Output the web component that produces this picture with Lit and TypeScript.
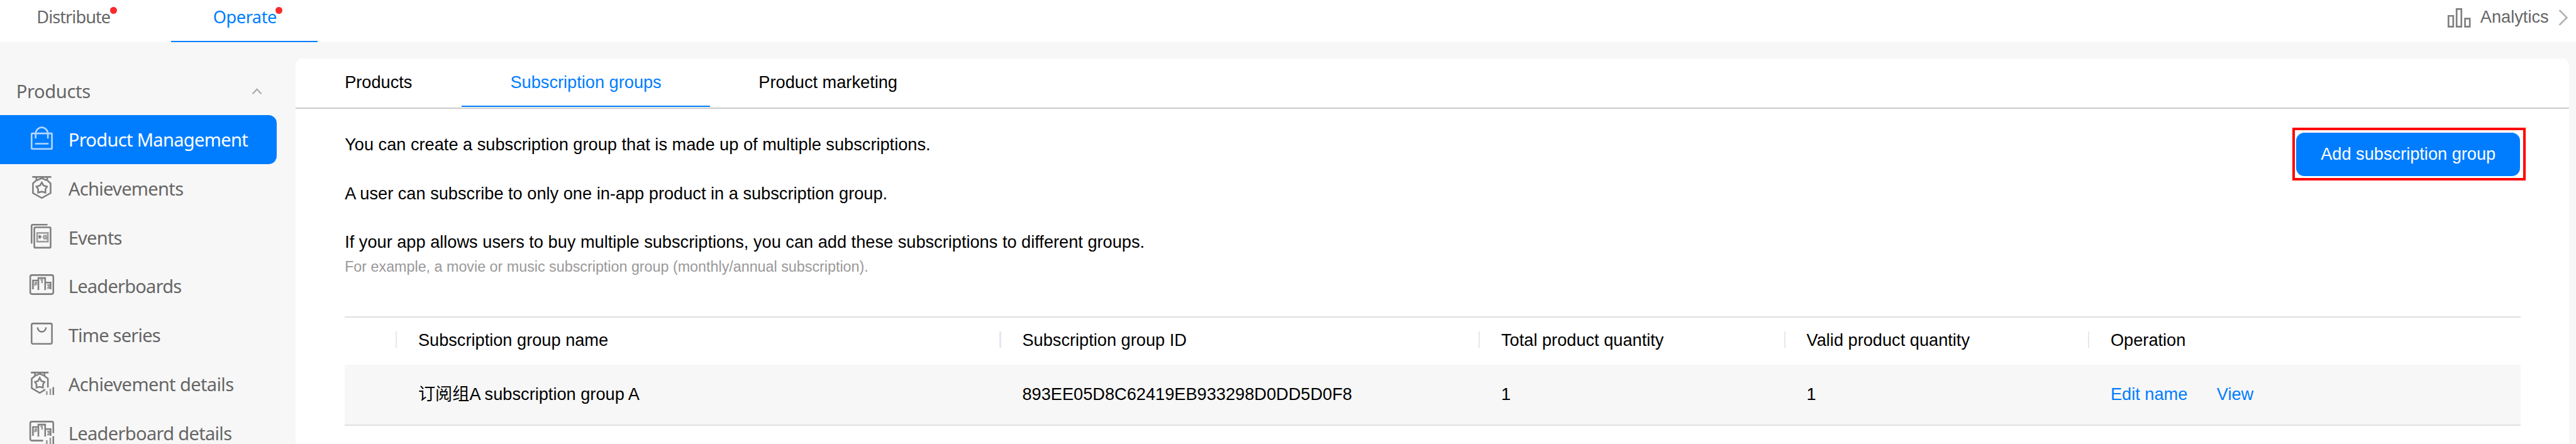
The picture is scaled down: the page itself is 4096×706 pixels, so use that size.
import { LitElement, html, css, svg, unsafeCSS } from "lit";
import { customElement } from "lit/decorators.js";
import { classMap } from "lit/directives/class-map.js";

// Converts a length on the 1898-unit design grid to pixels of the 4096px layout.
const u = (n: number) => unsafeCSS(`${((n * 4096) / 1898).toFixed(3)}px`);

const podium = svg`
  <path d="M2.5 13V6.5H6.5M6.5 13.5V4.7H11.5V13.5M11.5 8H15.5V13" />
  <path class="soft" d="M3.8 8H5V9.2H4V10.3M8.2 6.3L9.2 5.6V8.4M13 9.8H14.3V12H13" />`;
const bars = svg`<path class="soft" d="M12.7 16.2V19M15.3 14.4V19" /><path d="M17.5 13.2V19" />`;

const icons: Record<string, unknown> = {
  bag: svg`<rect x="1.5" y="6.1" width="15" height="11.4" rx=".4" />
    <path d="M4.5 9.8V6.5a4.5 4.9 0 0 1 9 0V9.8M4 13.7H14" />`,
  medal: svg`<path d="M2 2.5H16M5 2.8V5L2.5 7.2V14.4L9 18L15.5 14.4V7.2L13 5V2.8M5.4 5L9 3.4L12.6 5" />
    <path d="M9 6.6L10.3 8.8L12.9 9.6L11.7 11.4V14L9 13.3L6.3 14V11.4L5.1 9.6L7.7 8.8Z" />`,
  events: svg`<path d="M13.2 1.5H2.3Q1.5 1.5 1.5 2.4V15.4" /><rect x="3.5" y="3.5" width="12" height="15" rx=".7" />
    <rect class="soft" x="5.6" y="7.6" width="7.9" height="6.4" />
    <path d="M7.5 9.2V11.8M6.5 10.5H8.7" /><path class="soft" d="M12.6 9.6H10.8L10.2 10.6L10.8 11.8H12.6V10.6H11.6" />`,
  board: svg`<rect x=".5" y="2.5" width="17" height="14" rx="1.3" />${podium}`,
  series: svg`<rect x="1.5" y="2.5" width="15" height="15" rx="1" /><path d="M5.9 5.4C6.2 9.7 11.8 9.7 12.1 5.4" />`,
  medalStats: svg`<path d="M1 2.5H14M4 2.8V5L1.6 7V14L7.5 17.5L11.6 15M13.5 13.6V7L11 5V2.8M4.3 4.8L7.5 3.4L10.7 4.8" />
    <path d="M7.5 6.4L8.7 8.7L11 9.5L9.9 11.2V13.6L7.5 13L5.1 13.6V11.2L4 9.5L6.3 8.7Z" />${bars}`,
  boardStats: svg`<path d="M10 16.5H1.8Q.5 16.5 .5 15.2V3.8Q.5 2.5 1.8 2.5H16.2Q17.5 2.5 17.5 3.8V11" />${podium}${bars}`,
};

const nav = [
  ["bag", "Product Management", "a"],
  ["medal", "Achievements", "a"],
  ["events", "Events", "b"],
  ["board", "Leaderboards", "b"],
  ["series", "Time series", "b"],
  ["medalStats", "Achievement details", "c"],
  ["boardStats", "Leaderboard details", "a"],
];

const columns = ["Subscription group name", "Subscription group ID", "Total product quantity", "Valid product quantity", "Operation"];

@customElement("app-root")
export class AppRoot extends LitElement {
  static styles = css`
    :host {
      display: flex; flex-direction: column; height: 706px; width: 4096px; overflow: hidden;
      background: #f7f7f7; color: #000;
      font: ${u(12.6)}/${u(18)} "Liberation Sans", Arial, "Noto Sans CJK SC", sans-serif;
    }
    * { box-sizing: border-box; }
    svg { display: block; flex: none; fill: none; overflow: visible; }

    .top { display: flex; justify-content: space-between; flex: none; height: ${u(31)}; background: #fff; color: #666; }
    .modes { display: flex; font: ${u(12.6)}/${u(18)} "Noto Sans", sans-serif; }
    .mode { height: ${u(31)}; padding: ${u(3.5)} 0 0 ${u(27)}; width: ${u(126)}; }
    .mode.on { width: ${u(108)}; padding-left: ${u(31)}; color: #007dff; border-bottom: ${u(1)} solid #007dff; }
    .label { position: relative; display: inline-block; letter-spacing: ${u(-0.45)}; white-space: nowrap; }
    .on .label { letter-spacing: ${u(-0.22)}; }
    .dot { position: absolute; left: ${u(54)}; top: ${u(1.5)}; width: ${u(5)}; height: ${u(5)}; border-radius: 50%; background: #fa2a2d; }
    .on .dot { left: ${u(46)}; }
    .analytics { display: flex; align-items: flex-start; padding-top: ${u(3.7)}; width: ${u(95.5)}; }
    .analytics span { width: ${u(57.5)}; margin-left: ${u(6)}; }
    .chart { width: ${u(19)}; height: ${u(16)}; margin-top: ${u(1.3)}; stroke: #808080; stroke-width: 1.25; }
    .next { width: ${u(7)}; height: ${u(12)}; margin-top: ${u(3.3)}; stroke: #b0b0b0; stroke-width: 1.2; }

    .body { display: flex; flex: 1; min-height: 0; }
    .side { width: ${u(218)}; flex: none; padding-top: ${u(18)}; font-family: "Noto Sans", sans-serif; font-size: ${u(13.5)}; color: #666; }
    .group { display: flex; align-items: center; justify-content: space-between; height: ${u(36)};
      padding: ${u(0.6)} ${u(25)} 0 ${u(11.9)}; letter-spacing: ${u(-0.17)}; }
    .group svg { width: ${u(7)}; height: ${u(5)}; stroke: #a8a8a8; }
    .item { display: flex; align-items: center; width: ${u(204)}; height: ${u(36)}; padding-left: ${u(22)}; white-space: nowrap; }
    .item svg { width: ${u(18)}; height: ${u(20)}; margin-top: ${u(-2)}; stroke: #808080; stroke-width: 1.2; }
    .item svg .soft { stroke: #9c9c9c; }
    .item span { margin-left: ${u(10.4)}; padding-top: ${u(0.5)}; }
    .item.active { background: #007dff; color: #fff; border-radius: 0 ${u(6)} ${u(6)} 0; }
    .item.active svg { stroke: #b4d8ff; }
    .a span { letter-spacing: ${u(-0.335)}; }
    .b span { letter-spacing: ${u(-0.38)}; }
    .c span { letter-spacing: ${u(-0.3)}; }

    .panel { width: ${u(1675)}; margin-top: ${u(12)}; background: #fff; border-radius: ${u(5)} ${u(5)} 0 0; }
    .tabs { display: flex; height: ${u(37)}; border-bottom: ${u(1)} solid #ccc; }
    .tab { height: ${u(36)}; padding: ${u(8.9)} ${u(36)} 0; white-space: nowrap; }
    .tab.t0 { width: ${u(122)}; }
    .tab.t1 { width: ${u(183)}; color: #007dff; border-bottom: ${u(1)} solid #007dff; }
    .content { padding: ${u(14)} ${u(32)} 0 ${u(36)}; }
    .intro { display: flex; justify-content: space-between; align-items: flex-start; height: ${u(139)}; }
    p { margin: 0 0 ${u(18)}; }
    .copy { padding-top: ${u(3.7)}; }
    .copy .note { margin-top: ${u(-16.3)}; color: #999; font-size: ${u(10.8)}; line-height: ${u(14)}; }
    .callout { width: ${u(172)}; height: ${u(39)}; border: ${u(2)} solid #f00; padding: ${u(2)} ${u(2)} ${u(1)} ${u(1)}; }
    button { display: block; width: ${u(165)}; height: ${u(32)}; padding: 0 0 ${u(0.4)}; border: 0; border-radius: ${u(6)};
      background: #007dff; color: #fff; font: inherit; }

    .table { width: ${u(1603)}; border-top: ${u(1)} solid #e0e0e0; border-bottom: ${u(1)} solid #e0e0e0; }
    .row { display: grid; grid-template-columns: ${u(37.4)} ${u(445.1)} ${u(352.9)} ${u(225)} ${u(224)} 1fr; align-items: center; height: ${u(44)}; background: #f7f7f7; padding-bottom: ${u(0.6)}; }
    .row.head { height: ${u(35)}; background: #fff; padding-bottom: ${u(1.2)}; }
    .cell { padding-left: ${u(16.7)}; white-space: nowrap; }
    .head .cell { display: flex; align-items: center; padding-left: 0; }
    .head .cell::before { content: ""; width: ${u(1)}; height: ${u(12)}; margin: 0 ${u(15.7)} ${u(1.2)} 0; background: #e6e8ef; }
    .links { display: flex; gap: ${u(21.5)}; color: #007dff; }
  `;

  render() {
    return html`
      <header class="top">
        <div class="modes">
          <div class="mode"><span class="label">Distribute<i class="dot"></i></span></div>
          <div class="mode on"><span class="label">Operate<i class="dot"></i></span></div>
        </div>
        <div class="analytics">
          <svg class="chart" viewBox="0 0 19 16"><path d="M1.5 6.6H5V14.5H1.5ZM7.5 1.6H11V14.5H7.5ZM13.7 8.6H17.2V14.5H13.7Z" /></svg>
          <span>Analytics</span>
          <svg class="next" viewBox="0 0 7 12"><path d="M.7 .5L6.2 6L.7 11.5" /></svg>
        </div>
      </header>
      <div class="body">
        <nav class="side">
          <div class="group">Products<svg viewBox="0 0 7 5"><path d="M.3 4.3L3.5 .8L6.7 4.3" /></svg></div>
          ${nav.map(([icon, label, fit], i) => html`
            <div class=${classMap({ item: true, active: i === 0, [fit]: true })}>
              <svg viewBox="0 0 18 20">${icons[icon]}</svg><span>${label}</span>
            </div>`)}
        </nav>
        <main class="panel">
          <div class="tabs">
            ${["Products", "Subscription groups", "Product marketing"].map((t, i) => html`<div class="tab t${i}">${t}</div>`)}
          </div>
          <div class="content">
            <div class="intro">
              <div class="copy">
                <p>You can create a subscription group that is made up of multiple subscriptions.</p>
                <p>A user can subscribe to only one in-app product in a subscription group.</p>
                <p>If your app allows users to buy multiple subscriptions, you can add these subscriptions to different groups.</p>
                <p class="note">For example, a movie or music subscription group (monthly/annual subscription).</p>
              </div>
              <div class="callout"><button>Add subscription group</button></div>
            </div>
            <div class="table">
              <div class="row head"><div></div>${columns.map((c) => html`<div class="cell">${c}</div>`)}</div>
              <div class="row">
                <div></div>
                <div class="cell">订阅组A subscription group A</div>
                <div class="cell">893EE05D8C62419EB933298D0DD5D0F8</div>
                <div class="cell">1</div>
                <div class="cell">1</div>
                <div class="cell links"><span>Edit name</span><span>View</span></div>
              </div>
            </div>
          </div>
        </main>
      </div>`;
  }
}
